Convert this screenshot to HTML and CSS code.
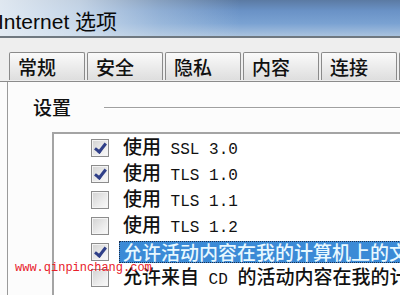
FILE: index.html
```html
<!DOCTYPE html>
<html>
<head>
<meta charset="utf-8">
<link rel="stylesheet" href="styles.css">
</head>
<body>
<div class="window">
  <div class="titlebar"><span class="title">Internet 选项</span></div>
  <div class="tabstrip">
    <div class="tab">常规</div>
    <div class="tab">安全</div>
    <div class="tab">隐私</div>
    <div class="tab">内容</div>
    <div class="tab">连接</div>
    <div class="tab">程序</div>
  </div>
  <div class="panel">
    <div class="group-head"><span class="group-label">设置</span><span class="group-line"></span></div>
    <div class="listbox">
      <div class="row"><span class="cb checked"></span><span class="txt">使用<span class="m"> SSL 3.0</span></span></div>
      <div class="row"><span class="cb checked"></span><span class="txt">使用<span class="m"> TLS 1.0</span></span></div>
      <div class="row"><span class="cb"></span><span class="txt">使用<span class="m"> TLS 1.1</span></span></div>
      <div class="row"><span class="cb"></span><span class="txt">使用<span class="m"> TLS 1.2</span></span></div>
      <div class="row"><span class="cb checked"></span><span class="txt sel">允许活动内容在我的计算机上的文件中运行*</span></div>
      <div class="row"><span class="cb"></span><span class="txt">允许来自<span class="m"> CD </span>的活动内容在我的计算机上运行*</span></div>
    </div>
  </div>
  <div class="watermark">www.qinpinchang.com</div>
</div>
</body>
</html>
```

FILE: styles.css
```css
html, body {
  margin: 0;
  padding: 0;
  width: 400px;
  height: 295px;
  overflow: hidden;
  background: #fbfbfb;
}
.window {
  position: relative;
  width: 400px;
  height: 295px;
  overflow: hidden;
  font-family: "Noto Sans CJK SC", "Liberation Sans", sans-serif;
  color: #111;
}
.titlebar {
  height: 36px;
  border-bottom: 2px solid #6f7880;
  background:
    linear-gradient(to right, rgba(230,237,244,0.95) 0, rgba(218,229,240,0.8) 80px, rgba(200,216,232,0.4) 160px, rgba(200,216,232,0) 240px),
    linear-gradient(to bottom, #5b7aa3 0, #6a92c6 30%, #7aa2d2 65%, #a9c2de 100%);
  display: flex;
  align-items: center;
}
.title {
  font-family: "Liberation Sans", "Noto Sans CJK SC", sans-serif;
  font-size: 21px;
  margin-left: -2px;
  margin-top: 4px;
  color: #0a0a0a;
  white-space: nowrap;
}
.tabstrip {
  background: #eeeeee;
  display: flex;
  padding: 14px 0 0 9px;
  height: 29px;
  border-bottom: 1px solid #8c8c8c;
}
.tab {
  flex: none;
  width: 66px;
  height: 27px;
  margin-right: 2px;
  border: 1px solid #8a8a8a;
  border-bottom: none;
  border-radius: 2px 2px 0 0;
  background: linear-gradient(to bottom, #fafafa 0, #ececec 50%, #dedede 100%);
  font-size: 19px;
  font-weight: 500;
  line-height: 27px;
  padding-left: 8px;
  white-space: nowrap;
}
.panel {
  margin-left: 7px;
  border-left: 1px solid #9a9a9a;
  background: #fcfcfc;
  height: 220px;
}
.group-head {
  display: flex;
  align-items: center;
  height: 40px;
  padding-top: 9px;
  box-sizing: border-box;
}
.group-label {
  font-size: 19px;
  font-weight: 500;
  margin-left: 25px;
  line-height: 24px;
}
.group-line {
  flex: 1;
  height: 1px;
  background: #a0a0a0;
  border-bottom: 1px solid #ffffff;
  margin-left: 33px;
  margin-top: 3px;
}
.listbox {
  margin-top: 10px;
  margin-left: 44px;
  border-top: 2px solid #a4a4a4;
  border-left: 2px solid #a4a4a4;
  background: #ffffff;
  height: 200px;
  padding-top: 1px;
}
.row {
  display: flex;
  align-items: center;
  height: 26px;
  white-space: nowrap;
}
.cb {
  flex: none;
  width: 16px;
  height: 16px;
  margin-left: 37px;
  border: 1px solid #8c8c8c;
  background: linear-gradient(135deg, #d2d2d2 0, #ececec 60%, #fafafa 100%);
  box-shadow: inset 0 0 0 1px #f4f4f4;
  position: relative;
}
.cb.checked::after {
  content: "";
  position: absolute;
  left: 5px;
  top: 1px;
  width: 4px;
  height: 9px;
  border-right: 3px solid #2f3f88;
  border-bottom: 3px solid #2f3f88;
  transform: rotate(38deg);
}
.txt {
  font-size: 19px;
  font-weight: 500;
  margin-left: 10px;
  padding: 0 4px;
  line-height: 22px;
}
.m {
  font-family: "Liberation Mono", monospace;
  font-size: 16px;
  font-weight: 400;
}
.sel {
  background: #3b8ad6;
  color: #e8f8ff;
  outline: 1px dotted #1a3050;
  outline-offset: -1px;
}
.watermark {
  position: absolute;
  left: 15px;
  top: 261px;
  font-family: "Liberation Mono", monospace;
  font-size: 12px;
  color: #e8202a;
  white-space: nowrap;
}
```
